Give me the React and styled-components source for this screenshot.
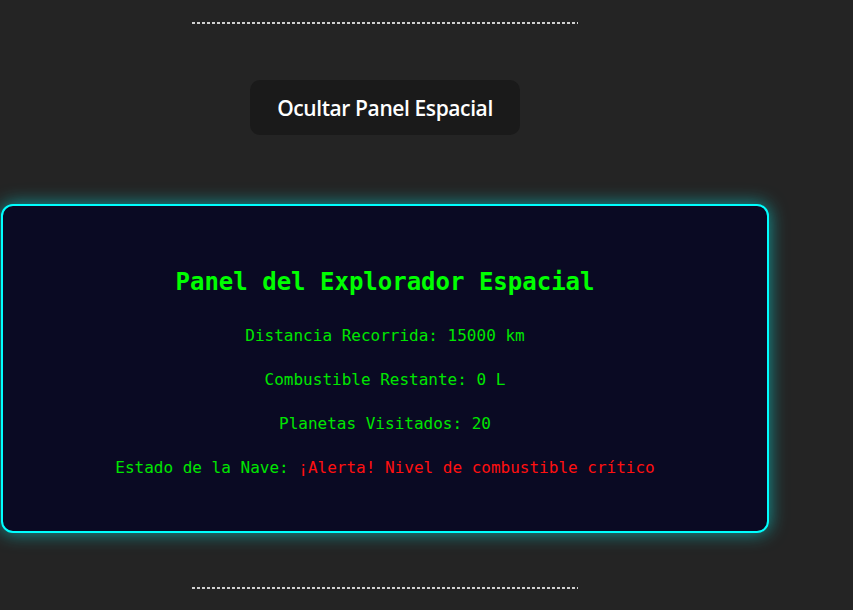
import React from "react";
import styled, { createGlobalStyle } from "styled-components";

const Global = createGlobalStyle`
  html, body { margin: 0; padding: 0; background: #242424; }
  body { font-family: "DejaVu Sans Mono", "Liberation Mono", monospace; }
`;

const Page = styled.div`
  width: 770px;
  display: flex;
  flex-direction: column;
  align-items: center;
  padding-top: 22px;
`;

const Divider = styled.div`
  width: 386px;
  height: 2px;
  margin-right: 1px;
  background: repeating-linear-gradient(
    to right,
    #d0d0d0 0 3px,
    transparent 3px 5px
  );
  margin-top: ${(p) => p.$mt || 0}px;
`;

const ToggleButton = styled.button`
  margin-top: 56px;
  height: 55px;
  padding: 0 27px;
  border: none;
  border-radius: 10px;
  background: #1a1a1a;
  color: #ffffff;
  font-family: "Open Sans", "Noto Sans", sans-serif;
  font-size: 21px;
  font-weight: 600;
  letter-spacing: -0.4px;
  cursor: pointer;
`;

const Panel = styled.section`
  margin-top: 69px;
  box-sizing: border-box;
  width: 768px;
  border: 2px solid #00ffff;
  border-radius: 12px;
  background: #0a0a23;
  box-shadow: 0 0 18px rgba(0, 255, 255, 0.55);
  padding: 62px 20px 53px;
  display: flex;
  flex-direction: column;
  align-items: center;
  text-align: center;
`;

const Title = styled.h2`
  margin: 0 0 30px;
  font-size: 24px;
  line-height: 28px;
  font-weight: 700;
  color: #00ff00;
`;

const Stat = styled.p`
  margin: 0 0 24px;
  font-size: 16px;
  line-height: 20px;
  color: #00e600;
  &:last-child { margin-bottom: 0; }
`;

const Alert = styled.span`
  color: #ff1010;
`;

export default function App() {
  return (
    <>
      <Global />
      <Page>
        <Divider />
        <ToggleButton>Ocultar Panel Espacial</ToggleButton>
        <Panel>
          <Title>Panel del Explorador Espacial</Title>
          <Stat>Distancia Recorrida: 15000 km</Stat>
          <Stat>Combustible Restante: 0 L</Stat>
          <Stat>Planetas Visitados: 20</Stat>
          <Stat>
            Estado de la Nave: <Alert>¡Alerta! Nivel de combustible crítico</Alert>
          </Stat>
        </Panel>
        <Divider $mt={54} />
      </Page>
    </>
  );
}
